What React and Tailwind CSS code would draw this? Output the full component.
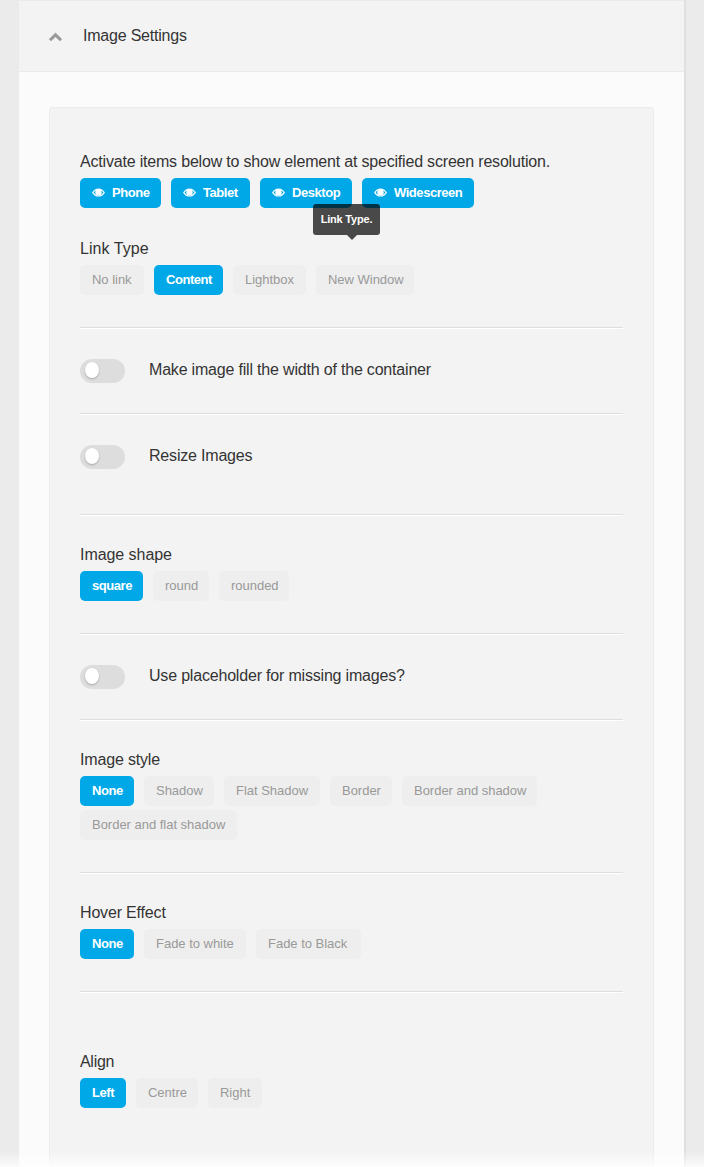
import React from "react";

function EyeIcon() {
  return (
    <svg viewBox="0 0 13 9" className="relative -top-[0.5px] h-[9px] w-[13px] shrink-0" fill="none" stroke="currentColor">
      <path d="M0.8 4.6C2.2 2.2 4.2 1.1 6.5 1.1s4.3 1.1 5.7 3.5C10.8 6.9 8.8 8 6.5 8S2.2 6.9 0.8 4.6z" strokeWidth="1.2" />
      <circle cx="6.5" cy="4.2" r="3.2" fill="currentColor" stroke="none" />
    </svg>
  );
}

function ChevronUp() {
  return (
    <svg
      viewBox="90 480 1612 1035"
      className="mt-px h-[8px] w-[13px] overflow-visible"
      fill="#999999"
      stroke="#999999"
      strokeWidth="50"
    >
      <path d="M1683 1331l-166 165q-19 19 -45 19t-45 -19l-531 -531l-531 531q-19 19 -45 19t-45 -19l-166 -165q-19 -19 -19 -45.5t19 -45.5l742 -741q19 -19 45 -19t45 19l742 741q19 19 19 45.5t-19 45.5z" />
    </svg>
  );
}

function Choice({ label, width, active, eye }) {
  return (
    <button
      type="button"
      className={
        "flex h-[30px] items-center gap-[7px] rounded-[5px] px-3 text-[13px] leading-[30px] whitespace-nowrap " +
        width +
        (active ? " bg-[#00a8e8] font-bold text-white" : " bg-[#eeeeee] text-[#999999]")
      }
    >
      {eye && <EyeIcon />}
      <span className={active ? "tracking-[-0.45px]" : "tracking-[-0.02px]"}>{label}</span>
    </button>
  );
}

function Group({ label, className, tracking, children }) {
  return (
    <section className={className}>
      <div className={"h-6 leading-[26px] whitespace-nowrap " + tracking}>{label}</div>
      <div className="mt-[5px] flex flex-wrap gap-x-[10px] gap-y-1">{children}</div>
    </section>
  );
}

function Toggle({ label }) {
  return (
    <div className="mt-[30px] flex h-6">
      <button
        type="button"
        aria-label={label}
        className="flex h-6 w-[45px] items-start rounded-full bg-[#dddddd] pt-[3px] pl-[5px]"
      >
        <span className="block h-4 w-[14px] rounded-[50%] bg-white shadow-[0_1px_2px_rgba(0,0,0,0.25)]" />
      </button>
      <span className="ml-6 h-[22px] leading-[22px] tracking-[-0.19px]">{label}</span>
    </div>
  );
}

function Divider({ className }) {
  return <div className={"h-[2px] border-t border-b border-t-[#dddddd] border-b-white " + className} />;
}

export default function App() {
  return (
    <div className="relative h-[1167px] w-[704px] overflow-hidden bg-[#ebebeb] pl-[19px] font-['Liberation_Sans',Arial,sans-serif] text-[16px] text-[#333333]">
      <div className="h-full w-[667px] border-r-2 border-[#dfdfdf] bg-[#fbfbfb]">
        <header className="flex h-[72px] items-center border-t border-b border-[#ebebeb] bg-[#f3f3f3] pl-[30px]">
          <ChevronUp />
          <h2 className="ml-[21px] leading-6 tracking-[-0.21px]">Image Settings</h2>
        </header>
        <main className="mt-[35px] ml-[30px] h-[1100px] w-[605px] rounded-[3px] border border-[#ececec] bg-[#f3f3f3] px-[30px] pt-[41px]">
          <Group
            label="Activate items below to show element at specified screen resolution."
            tracking="tracking-[-0.19px]"
          >
            <Choice label="Phone" width="w-[81px]" active eye />
            <Choice label="Tablet" width="w-[79px]" active eye />
            <Choice label="Desktop" width="w-[92px]" active eye />
            <Choice label="Widescreen" width="w-[112px]" active eye />
          </Group>
          <Group label="Link Type" tracking="tracking-[0.06px]" className="mt-7">
            <Choice label="No link" width="w-[64px]" />
            <Choice label="Content" width="w-[69px]" active />
            <Choice label="Lightbox" width="w-[73px]" />
            <Choice label="New Window" width="w-[98px]" />
          </Group>
          <Divider className="mt-8" />
          <Toggle label="Make image fill the width of the container" />
          <Divider className="mt-[30px]" />
          <Toggle label="Resize Images" />
          <Divider className="mt-[45px]" />
          <Group label="Image shape" tracking="tracking-[-0.05px]" className="mt-[26px]">
            <Choice label="square" width="w-[63px]" active />
            <Choice label="round" width="w-[56px]" />
            <Choice label="rounded" width="w-[70px]" />
          </Group>
          <Divider className="mt-8" />
          <Toggle label="Use placeholder for missing images?" />
          <Divider className="mt-[30px]" />
          <Group label="Image style" tracking="tracking-[-0.17px]" className="mt-[26px]">
            <Choice label="None" width="w-[54px]" active />
            <Choice label="Shadow" width="w-[70px]" />
            <Choice label="Flat Shadow" width="w-[96px]" />
            <Choice label="Border" width="w-[62px]" />
            <Choice label="Border and shadow" width="w-[135px]" />
            <Choice label="Border and flat shadow" width="w-[157px]" />
          </Group>
          <Divider className="mt-8" />
          <Group label="Hover Effect" tracking="tracking-[-0.17px]" className="mt-[26px]">
            <Choice label="None" width="w-[54px]" active />
            <Choice label="Fade to white" width="w-[102px]" />
            <Choice label="Fade to Black" width="w-[105px]" />
          </Group>
          <Divider className="mt-8" />
          <Group label="Align" tracking="tracking-[-0.3px]" className="mt-14">
            <Choice label="Left" width="w-[46px]" active />
            <Choice label="Centre" width="w-[62px]" />
            <Choice label="Right" width="w-[54px]" />
          </Group>
        </main>
      </div>
      <div className="absolute top-[204px] left-[313px] h-[31px] w-[67px] rounded-[3px] bg-black/70 text-center text-[11px] leading-[30px] font-bold tracking-[-0.2px] whitespace-nowrap text-white">
        Link Type.
        <span className="absolute top-full left-[34px] border-x-[5px] border-t-[5px] border-x-transparent border-t-black/70" />
      </div>
      <div className="absolute bottom-0 left-0 h-[16px] w-full bg-linear-to-b from-white/0 to-white/80" />
    </div>
  );
}
